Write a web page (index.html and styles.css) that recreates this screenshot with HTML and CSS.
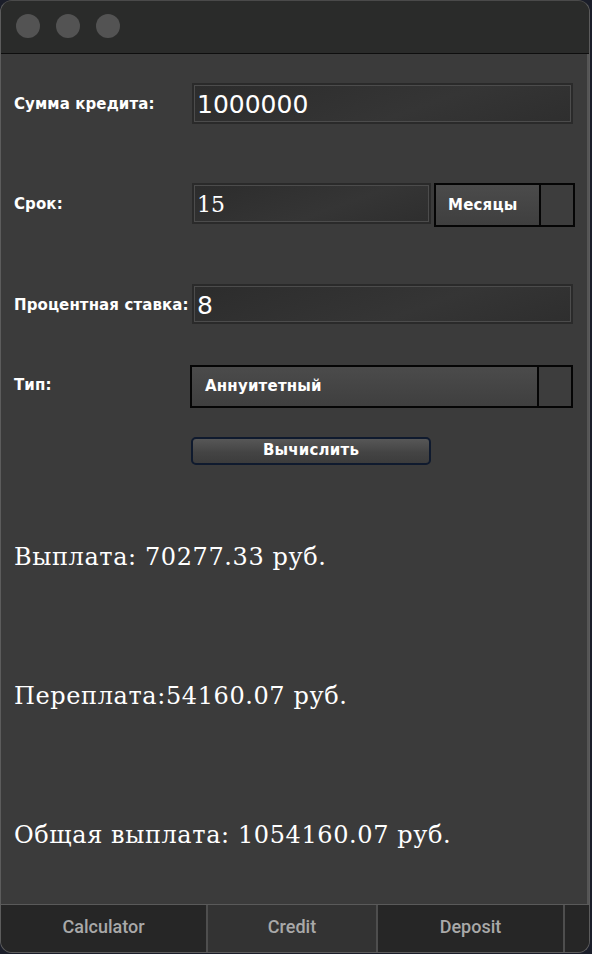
FILE: index.html
```html
<!DOCTYPE html>
<html lang="ru">
<head>
<meta charset="utf-8">
<title>Credit</title>
<link rel="stylesheet" href="styles.css">
</head>
<body>
<div class="window">
  <div class="titlebar">
    <span class="light"></span><span class="light"></span><span class="light"></span>
  </div>
  <div class="content">
    <div class="row row-sum">
      <div class="label">Сумма кредита:</div>
      <div class="field field-wide"><span class="val sans">1000000</span></div>
    </div>
    <div class="row row-term">
      <div class="label">Срок:</div>
      <div class="field field-term"><span class="val serif">15</span></div>
      <div class="combo combo-term"><span class="combo-text">Месяцы</span><span class="combo-arrow"></span></div>
    </div>
    <div class="row row-rate">
      <div class="label">Процентная ставка:</div>
      <div class="field field-wide field-rate"><span class="val sans">8</span></div>
    </div>
    <div class="row row-type">
      <div class="label">Тип:</div>
      <div class="combo combo-type"><span class="combo-text">Аннуитетный</span><span class="combo-arrow"></span></div>
    </div>
    <div class="row row-btn">
      <div class="label"></div>
      <button class="btn">Вычислить</button>
    </div>
    <div class="results">
      <p class="result">Выплата: 70277.33 руб.</p>
      <p class="result">Переплата:54160.07 руб.</p>
      <p class="result">Общая выплата: 1054160.07 руб.</p>
    </div>
  </div>
  <div class="tabs">
    <div class="tab tab-calc">Calculator</div>
    <div class="tab tab-credit">Credit</div>
    <div class="tab tab-deposit">Deposit</div>
    <div class="tab tab-rest"></div>
  </div>
</div>
</body>
</html>
```
FILE: styles.css
```css
html, body {
  margin: 0;
  padding: 0;
  background: #1b1e2a;
  width: 592px;
  height: 954px;
  overflow: hidden;
}
.window {
  width: 590px;
  height: 953px;
  border-radius: 12px;
  overflow: hidden;
  background: #3b3b3b;
  border: 1px solid #5c5c5c;
  border-top-color: #4a4a4a;
  box-sizing: border-box;
  display: flex;
  flex-direction: column;
  font-family: "DejaVu Sans", sans-serif;
}
.titlebar {
  height: 53px;
  flex: none;
  background: #2a2b2a;
  border-bottom: 1px solid #0e0e0e;
  display: flex;
  align-items: center;
  gap: 16px;
  padding-left: 15px;
  box-sizing: border-box;
}
.light {
  width: 24px;
  height: 24px;
  border-radius: 50%;
  background: #535353;
  margin-top: -2px;
}
.content {
  flex: 1;
  min-height: 0;
  overflow: hidden;
  padding-left: 13px;
  box-sizing: border-box;
  border-right: 2px solid #555;
}
.row {
  display: flex;
  align-items: flex-start;
}
.label {
  width: 178px;
  flex: none;
  color: #ffffff;
  font-weight: bold;
  font-size: 15px;
  letter-spacing: 0.1px;
}
.row-sum { margin-top: 29px; height: 41px; }
.row-sum .label { margin-top: 12px; }
.row-term { margin-top: 59px; height: 44px; }
.row-term .label { margin-top: 12px; }
.row-rate { margin-top: 57px; height: 41px; }
.row-rate .label { margin-top: 12px; }
.row-type { margin-top: 40px; height: 43px; }
.row-type .label { margin-top: 11px; margin-right: -1px; }
.row-btn { margin-top: 29px; height: 27px; }
.field {
  height: 41px;
  box-sizing: border-box;
  border: 2px solid #2a2a2a;
  box-shadow: inset 0 0 0 1px #4c4c4c;
  background: linear-gradient(160deg, #2c2c2c 0%, #353535 60%, #2e2e2e 100%);
  display: flex;
  align-items: center;
  padding-left: 3px;
  color: #fff;
}
.field-wide { width: 381px; }
.field-rate { height: 40px; }
.field-term { width: 239px; }
.val.sans {
  font-family: "DejaVu Sans", sans-serif;
  font-size: 25px;
  padding-top: 2px;
}
.val.serif {
  font-family: "DejaVu Serif", serif;
  font-size: 22px;
  padding-top: 2px;
}
.combo {
  height: 44px;
  box-sizing: border-box;
  border: 2px solid #050505;
  display: flex;
  background: linear-gradient(180deg, #4b4b4b 0%, #3f3f3f 100%);
}
.combo-term { width: 141px; margin-left: 3px; }
.combo-type { width: 383px; height: 43px; margin-left: -1px; }
.combo-text {
  flex: 1;
  color: #fff;
  font-weight: bold;
  font-size: 15px;
  letter-spacing: 0.2px;
  display: flex;
  align-items: center;
  padding-left: 12px;
}
.combo-type .combo-text { padding-left: 13px; padding-bottom: 2px; }
.combo-arrow {
  width: 32px;
  flex: none;
  border-left: 2px solid #050505;
  background: #3d3d3d;
}
.btn {
  width: 240px;
  height: 28px;
  margin-left: -1px;
  border: 2px solid #0f1a2e;
  border-radius: 5px;
  background: linear-gradient(180deg, #575757 0%, #444 55%, #3c3c3c 100%);
  color: #fff;
  font-family: "DejaVu Sans", sans-serif;
  font-weight: bold;
  font-size: 15px;
  letter-spacing: 0.2px;
  padding: 0 0 3px 0;
  line-height: 20px;
}
.results {
  margin-top: 78px;
}
.result {
  margin: 0;
  height: 139px;
  color: #fff;
  font-family: "DejaVu Serif", serif;
  font-size: 24px;
  line-height: 30px;
  letter-spacing: 0.6px;
}
.tabs {
  height: 47px;
  flex: none;
  border-top: 1px solid #5a5a5a;
  display: flex;
  background: #262626;
}
.tab {
  display: flex;
  align-items: center;
  justify-content: center;
  color: #a9a9a9;
  font-size: 18px;
  font-family: "Roboto", "Noto Sans", sans-serif;
  font-weight: 500;
  padding-bottom: 4px;
  box-sizing: border-box;
}
.tab-calc { width: 205px; }
.tab-credit { width: 172px; background: #333; border-left: 2px solid #4e4e4e; border-right: 2px solid #4e4e4e; }
.tab-deposit { width: 185px; }
.tab-rest { flex: 1; border-left: 2px solid #4e4e4e; }
```
